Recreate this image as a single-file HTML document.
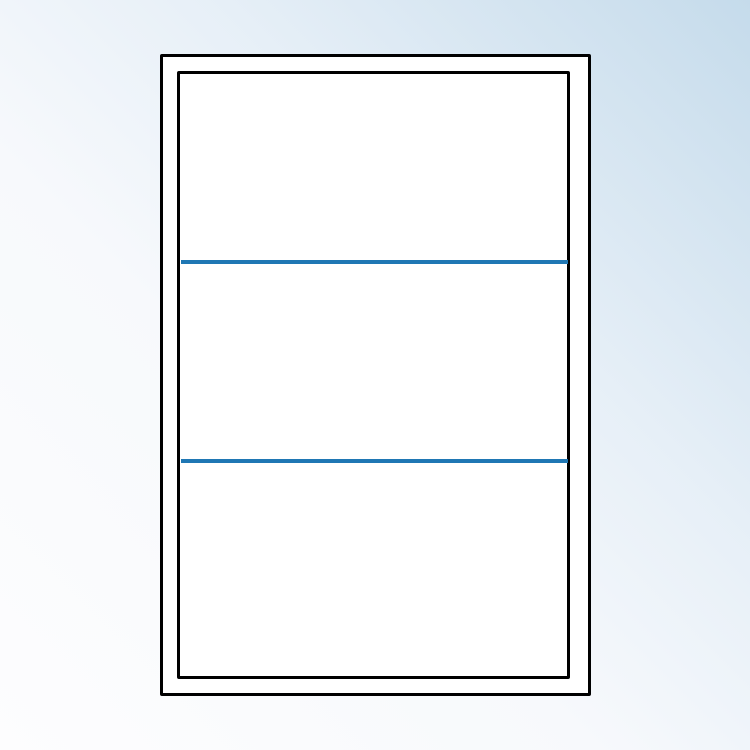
<!DOCTYPE html><html><head><style>
html,body{margin:0;padding:0}
body{width:750px;height:750px;position:relative;overflow:hidden;background:linear-gradient(225deg,#c5dbeb 0%,#e6eff7 35%,#f7f9fc 60%,#fdfdfe 100%);}
.o{position:absolute;left:160px;top:54px;width:425px;height:636px;border:3px solid #000;background:#fff;border-radius:2px}
.i{position:absolute;left:177px;top:71px;width:387px;height:602px;border:3px solid #000;background:#fff;border-radius:2px}
.b{position:absolute;left:181px;width:387px;height:4px;background:#1f77b4}
</style></head><body>
<div class="o"></div><div class="i"></div>
<div class="b" style="top:260px"></div>
<div class="b" style="top:459px"></div>
</body></html>
